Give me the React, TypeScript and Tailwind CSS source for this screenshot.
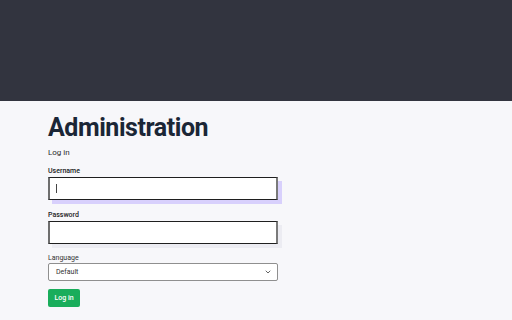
export default function App() {
  const font = { fontFamily: 'Roboto, "Liberation Sans", sans-serif' };
  return (
    <div className="w-[512px] h-[320px] bg-[#f7f7fa] flex flex-col overflow-hidden" style={font}>
      <div className="h-[101px] bg-[#32343f] shrink-0" />
      <div className="pl-[48px] pt-[12px] flex flex-col">
        <h1 className="text-[25px] leading-[30px] font-bold text-[#1b2636] tracking-[-0.45px]">Administration</h1>
        <p className="mt-[4px] text-[8px] leading-[12px] text-[#2a2a2a]">Log in</p>
        <label className="mt-[7px] text-[7px] leading-[10px] font-medium text-[#222]">Username</label>
        <div className="mt-[1px] w-[230px] h-[23px] bg-white border-y border-y-[#1f1f1f] border-x-2 border-l-[#6e6e6e] border-r-[#7a7a7a] shadow-[4px_4px_0_0_#d8d0fc] flex items-center pl-[6px]">
          <div className="w-px h-[9px] bg-[#444]" />
        </div>
        <label className="mt-[10px] text-[7px] leading-[10px] font-medium text-[#222]">Password</label>
        <div className="mt-[1px] w-[230px] h-[23px] bg-white border-y border-y-[#1f1f1f] border-x-2 border-l-[#6e6e6e] border-r-[#7a7a7a] shadow-[4px_4px_0_0_#ececf2]" />
        <label className="mt-[9px] text-[7px] leading-[10px] text-[#333]">Language</label>
        <div className="w-[230px] h-[18px] bg-white border border-[#8f8f8f] rounded-[2px] flex items-center justify-between pl-[7px] pr-[5px]">
          <span className="text-[7px] text-[#333]">Default</span>
          <svg width="8" height="8" viewBox="0 0 24 24" fill="none" stroke="#444" strokeWidth="2.5" strokeLinecap="round" strokeLinejoin="round"><path d="m6 9 6 6 6-6" /></svg>
        </div>
        <button className="mt-[8px] w-[32px] h-[18px] rounded-[2px] bg-[#19ad5b] text-white text-[7px] font-medium flex items-center justify-center">Log in</button>
      </div>
    </div>
  );
}
